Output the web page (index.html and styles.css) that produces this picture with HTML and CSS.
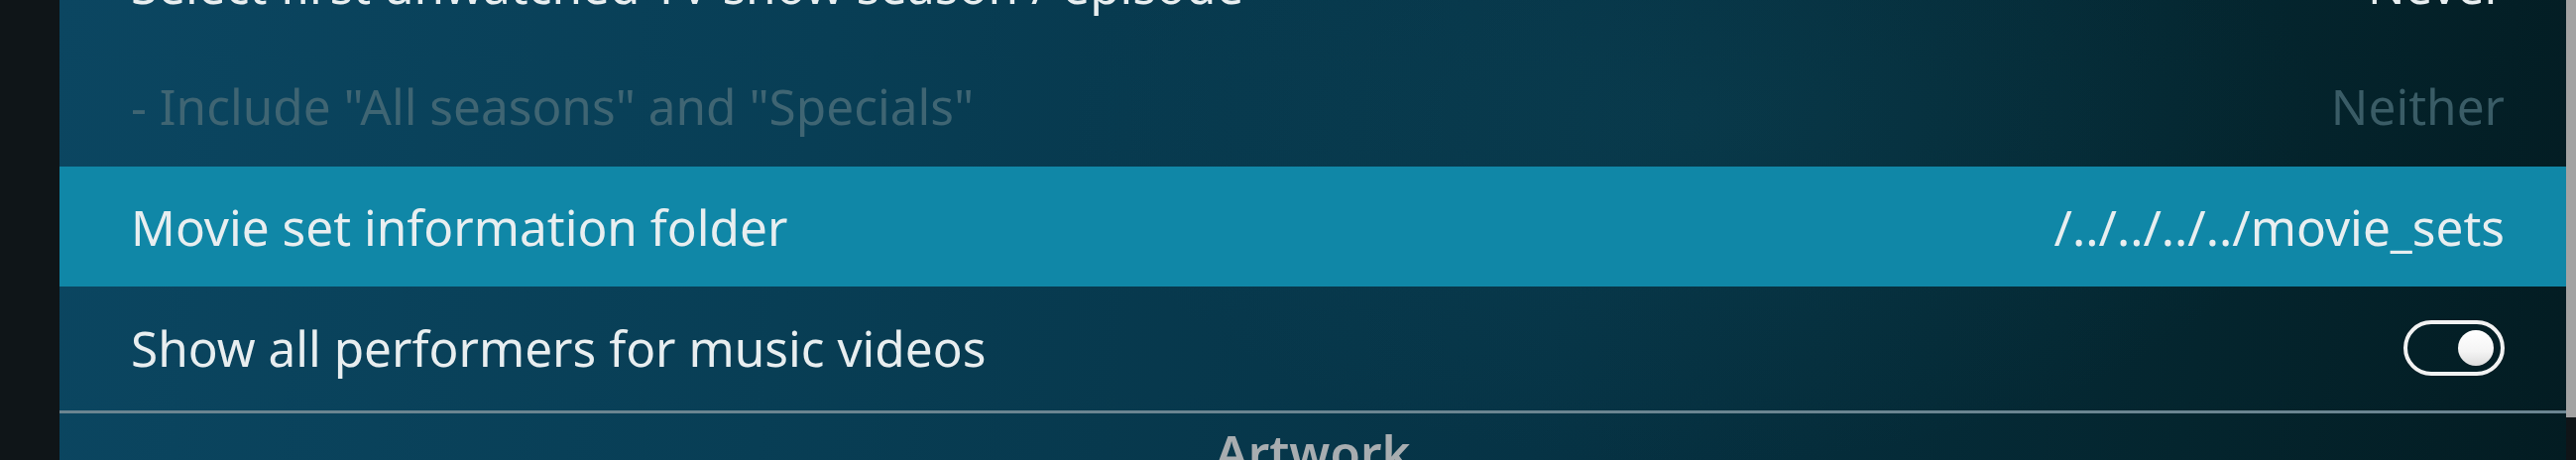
FILE: index.html
```html
<!DOCTYPE html>
<html lang="en">
<head>
<meta charset="utf-8">
<title>Settings - Library</title>
<link rel="stylesheet" href="styles.css">
</head>
<body>
<div class="screen">
  <div class="sidebar"></div>
  <main class="panel">
    <div class="list">
      <div class="row">
        <span class="label">Select first unwatched TV show season / episode</span>
        <span class="value">Never</span>
      </div>
      <div class="row disabled">
        <span class="label">- Include "All seasons" and "Specials"</span>
        <span class="value">Neither</span>
      </div>
      <div class="row focused">
        <span class="label">Movie set information folder</span>
        <span class="value">/../../../../movie_sets</span>
      </div>
      <div class="row">
        <span class="label">Show all performers for music videos</span>
        <span class="toggle on"><span class="knob"></span></span>
      </div>
    </div>
    <div class="separator"></div>
    <div class="group-title">Artwork</div>
  </main>
  <div class="scroll">
    <div class="scroll-thumb"></div>
  </div>
</div>
</body>
</html>
```

FILE: styles.css
```css
html, body {
  margin: 0;
  padding: 0;
}

body {
  width: 2598px;
  height: 464px;
  overflow: hidden;
  background: #101619;
  font-family: "Noto Sans", "Open Sans", "DejaVu Sans", sans-serif;
  color: #e8eef0;
}

.screen {
  display: flex;
  height: 464px;
}

.sidebar {
  width: 60px;
  flex: none;
  background: #0f1518;
}

.panel {
  flex: 1;
  overflow: hidden;
  background:
    radial-gradient(ellipse 900px 500px at 1650px 120px, rgba(20, 90, 110, 0.2), rgba(20, 90, 110, 0) 70%),
    linear-gradient(100deg, #0b4661 0%, #083e55 30%, #063345 60%, #04252e 85%, #031c22 100%);
}

.list {
  margin-top: -76px;
}

.row {
  height: 122px;
  display: flex;
  align-items: center;
  justify-content: space-between;
  padding: 0 62px 0 72px;
  font-size: 49.5px;
  white-space: nowrap;
}

.row.disabled {
  color: #3f6573;
}

.row.disabled .value {
  color: #3a5c66;
}

.row.focused {
  background: #1087a7;
  height: 121px;
  margin-bottom: 1px;
}

.toggle {
  width: 102px;
  height: 56px;
  box-sizing: border-box;
  border: 4px solid #f2f2f2;
  border-radius: 28px;
  display: flex;
  align-items: center;
  justify-content: flex-end;
  padding-right: 7px;
}

.knob {
  width: 36px;
  height: 36px;
  border-radius: 50%;
  background: linear-gradient(180deg, #ffffff 0%, #f4f4f4 60%, #dcdcdc 100%);
}

.separator {
  height: 3px;
  margin-top: 2px;
  background: #6b8591;
}

.group-title {
  text-align: center;
  font-size: 49.5px;
  font-weight: 600;
  color: #a8adb0;
  margin-top: 5px;
  line-height: 68px;
}

.scroll {
  width: 10px;
  flex: none;
  background: #0f1518;
}

.scroll-thumb {
  height: 421px;
  background: #a3a3a3;
}
```
